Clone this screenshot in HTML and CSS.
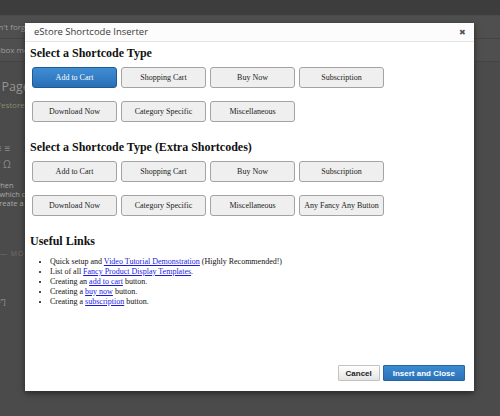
FILE: index.html
```html
<!DOCTYPE html>
<html lang="en">
<head>
  <meta charset="UTF-8">
  <title>eStore Shortcode Inserter</title>
  <link rel="stylesheet" href="styles.css">
</head>
<body>
  <div class="wp">
    <div class="adminbar"></div>
    <div class="notice n1"><div class="clip"><span>Don't forget</span></div></div>
    <div class="notice n2"><div class="clip"><span>Sandbox mode</span></div></div>
    <div class="clip page-title"><span>Edit Page</span></div>
    <div class="clip permalink"><span>/estore-shortcodes/</span></div>
    <div class="clip toolbar"><span>&#8801; &#8801;</span><span>? &#937;</span></div>
    <div class="clip editor-text">
      <p class="l1">Buttons when</p>
      <p class="l2">Buttons which can</p>
      <p class="l3">To create a post</p>
    </div>
    <div class="clip more">&mdash; MORE</div>
    <div class="clip code"><span>[fancy="4"]</span></div>
  </div>

  <div class="dialog">
    <div class="dialog-title">
      <span>eStore Shortcode Inserter</span>
      <span class="close">&#10006;</span>
    </div>
    <div class="dialog-body">
      <h3>Select a Shortcode Type</h3>
      <div class="btn-row">
        <button class="sc-btn active">Add to Cart</button>
        <button class="sc-btn">Shopping Cart</button>
        <button class="sc-btn">Buy Now</button>
        <button class="sc-btn">Subscription</button>
      </div>
      <div class="btn-row">
        <button class="sc-btn">Download Now</button>
        <button class="sc-btn">Category Specific</button>
        <button class="sc-btn">Miscellaneous</button>
      </div>

      <h3>Select a Shortcode Type (Extra Shortcodes)</h3>
      <div class="btn-row">
        <button class="sc-btn">Add to Cart</button>
        <button class="sc-btn">Shopping Cart</button>
        <button class="sc-btn">Buy Now</button>
        <button class="sc-btn">Subscription</button>
      </div>
      <div class="btn-row">
        <button class="sc-btn">Download Now</button>
        <button class="sc-btn">Category Specific</button>
        <button class="sc-btn">Miscellaneous</button>
        <button class="sc-btn">Any Fancy Any Button</button>
      </div>

      <h3>Useful Links</h3>
      <ul class="links">
        <li>Quick setup and <a href="#">Video Tutorial Demonstration</a> (Highly Recommended!)</li>
        <li>List of all <a href="#">Fancy Product Display Templates</a>.</li>
        <li>Creating an <a href="#">add to cart</a> button.</li>
        <li>Creating a <a href="#">buy now</a> button.</li>
        <li>Creating a <a href="#">subscription</a> button.</li>
      </ul>
    </div>
    <div class="dialog-foot">
      <button class="foot-btn">Cancel</button>
      <button class="foot-btn primary">Insert and Close</button>
    </div>
  </div>
</body>
</html>
```

FILE: styles.css
```css
html, body {
  margin: 0;
  padding: 0;
}
body {
  width: 500px;
  height: 416px;
  overflow: hidden;
  background-color: #4b4b4b;
  font-family: "Open Sans", Arial, sans-serif;
  position: relative;
}

/* dimmed page behind the dialog */
.wp {
  color: #9c9c9c;
  font-size: 8px;
  white-space: nowrap;
}
.clip {
  width: 25px;
  overflow: hidden;
}
.adminbar {
  height: 15px;
  background-color: #3d3d3d;
}
.notice {
  height: 22px;
  line-height: 22px;
  border-bottom: 1px solid #444;
  background-color: #4f4f4f;
}
.n1 {
  margin-top: 1px;
}
.n1 span {
  margin-left: -12px;
}
.n2 span {
  margin-left: -18px;
}
.page-title {
  margin-top: 17px;
  font-size: 12.5px;
  line-height: 16px;
  color: #959595;
}
.page-title span {
  margin-left: -24px;
}
.permalink {
  margin-top: 4px;
  line-height: 12px;
  color: #8b8a6e;
}
.permalink span {
  margin-left: -2px;
}
.toolbar {
  margin-top: 29px;
  font-size: 10px;
  line-height: 16px;
  color: #8a8a8a;
  display: flex;
  flex-direction: column;
}
.toolbar span {
  margin-left: -4px;
}
.editor-text p {
  margin: 0;
  font-size: 7.5px;
  line-height: 9px;
  color: #a8a8a8;
}
.editor-text .l1 {
  margin-top: 9px;
  margin-left: -35px;
}
.editor-text .l2 {
  margin-left: -30px;
}
.editor-text .l3 {
  margin-left: -15px;
}
.more {
  margin-top: 41px;
  font-size: 7px;
  color: #727272;
  letter-spacing: 1px;
}
.code {
  margin-top: 39px;
  font-size: 7px;
  color: #a4a4a4;
}
.code span {
  margin-left: -30px;
}

/* dialog */
.dialog {
  position: absolute;
  left: 25px;
  top: 23px;
  width: 449px;
  height: 368px;
  background-color: white;
  box-shadow: 0 2px 6px rgba(0, 0, 0, 0.5);
  display: flex;
  flex-direction: column;
}
.dialog-title {
  height: 18px;
  line-height: 18px;
  padding: 0 8px 0 9px;
  background-color: #fcfcfc;
  border-bottom: 1px solid #e5e5e5;
  font-size: 9.5px;
  color: #3a3a3a;
  display: flex;
  justify-content: space-between;
}
.close {
  font-size: 8px;
  color: #555;
}
.dialog-body {
  flex: 1;
  padding: 0 5px;
  font-family: "Liberation Serif", "Times New Roman", serif;
  color: #111;
}
.dialog-body h3 {
  font-size: 12px;
  line-height: 14px;
  margin: 18px 0 7px;
}
.dialog-body h3:first-child {
  margin-top: 4px;
}
.btn-row {
  display: flex;
  gap: 4px;
  padding-left: 2px;
  margin-bottom: 13px;
}
.sc-btn {
  width: 85px;
  height: 21px;
  box-sizing: border-box;
  padding: 0;
  font-family: "Liberation Serif", "Times New Roman", serif;
  font-size: 8px;
  color: #222;
  background-color: #efefef;
  border: 1px solid #a3a3a3;
  border-radius: 3px;
}
.sc-btn.active {
  color: white;
  background: linear-gradient(#3f8dd4, #2a6fb6);
  border-color: #1f5a95;
}
.links {
  margin: 9px 0 0;
  padding-left: 20px;
  font-size: 8px;
  line-height: 10px;
}
.links a {
  color: #1a1ae0;
}

.dialog-foot {
  display: flex;
  justify-content: flex-end;
  gap: 3px;
  padding: 0 9px 10px 0;
}
.foot-btn {
  height: 16px;
  box-sizing: border-box;
  padding: 0 7px;
  font-family: "Liberation Sans", Arial, sans-serif;
  font-size: 8px;
  font-weight: bold;
  color: #222;
  background: linear-gradient(#ffffff, #e4e4e4);
  border: 1px solid #c2c2c2;
  border-radius: 1px;
}
.foot-btn.primary {
  padding: 0 9px;
  color: white;
  background: linear-gradient(#3d8ad0, #2a72b8);
  border-color: #2465a3;
}
```
